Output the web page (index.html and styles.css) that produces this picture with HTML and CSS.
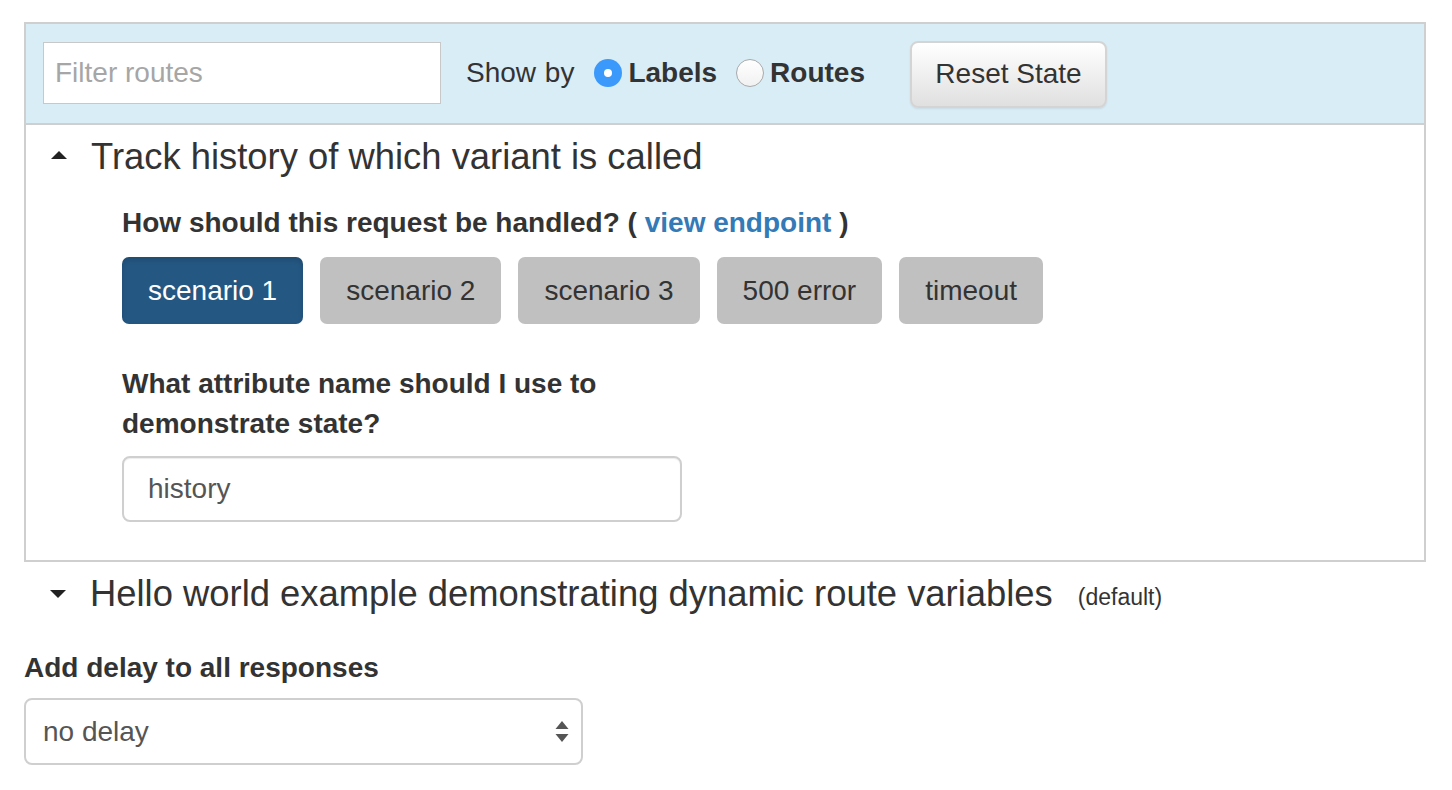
FILE: index.html
```html
<!DOCTYPE html>
<html>
<head>
<meta charset="utf-8">
<link rel="stylesheet" href="styles.css">
</head>
<body>
<div class="page">
  <div class="panel">
    <div class="toolbar">
      <input class="filter" type="text" placeholder="Filter routes">
      <span class="show-by">Show by</span>
      <label class="radio-opt"><span class="radio checked"></span><span class="radio-text">Labels</span></label>
      <label class="radio-opt"><span class="radio"></span><span class="radio-text">Routes</span></label>
      <button class="reset-btn">Reset State</button>
    </div>
    <div class="route-body">
      <div class="route-title">
        <span class="caret caret-up"></span>
        <span>Track history of which variant is called</span>
      </div>
      <div class="route-content">
        <div class="field-label">How should this request be handled? ( <a class="link" href="#">view endpoint</a> )</div>
        <div class="variants">
          <button class="variant active">scenario 1</button>
          <button class="variant">scenario 2</button>
          <button class="variant">scenario 3</button>
          <button class="variant">500 error</button>
          <button class="variant">timeout</button>
        </div>
        <div class="field-label attr-label">What attribute name should I use to demonstrate state?</div>
        <input class="text-input" type="text" value="history">
      </div>
    </div>
  </div>
  <div class="route-title collapsed">
    <span class="caret caret-down"></span>
    <span>Hello world example demonstrating dynamic route variables</span>
    <span class="default-tag">(default)</span>
  </div>
  <div class="field-label delay-label">Add delay to all responses</div>
  <div class="select-box">
    <span>no delay</span>
    <svg class="select-arrows" width="14" height="22" viewBox="0 0 14 22">
      <polygon points="7,0 13.5,8 0.5,8" fill="#555"/>
      <polygon points="0.5,13 13.5,13 7,21" fill="#555"/>
    </svg>
  </div>
</div>
</body>
</html>
```

FILE: styles.css
```css
html, body {
  margin: 0;
  padding: 0;
  background: #fff;
}
body {
  font-family: "Liberation Sans", Arial, Helvetica, sans-serif;
  font-size: 28px;
  line-height: 40px;
  color: #333;
}
.page {
  padding: 22px 26px 0 24px;
}
.panel {
  border: 2px solid #cfcfcf;
}
.toolbar {
  display: flex;
  align-items: center;
  height: 101px;
  padding-left: 17px;
  padding-bottom: 2px;
  box-sizing: border-box;
  background: #d9edf7;
  border-bottom: 2px solid #cfcfcf;
}
.filter {
  box-sizing: border-box;
  width: 398px;
  height: 62px;
  border: 1px solid #c8c8c8;
  border-radius: 0;
  padding: 0 11px;
  font-family: inherit;
  font-size: 28px;
  color: #555;
  background: #fff;
  outline: none;
}
.filter::placeholder {
  color: #a6a6a6;
}
.show-by {
  margin-left: 25px;
  margin-right: 20px;
  word-spacing: 1px;
}
.radio-opt {
  display: flex;
  align-items: center;
  font-weight: bold;
  margin-right: 19px;
}
.radio {
  box-sizing: border-box;
  width: 28px;
  height: 28px;
  border-radius: 50%;
  border: 1px solid #a9a9a9;
  background: linear-gradient(#fff, #f1f1f1);
  margin-right: 6px;
  position: relative;
}
.radio.checked {
  border: none;
  background: #3b99fc;
}
.radio.checked::after {
  content: "";
  position: absolute;
  left: 10px;
  top: 10px;
  width: 8px;
  height: 8px;
  border-radius: 50%;
  background: #fff;
}
.reset-btn {
  box-sizing: border-box;
  margin-left: 26px;
  margin-top: 3px;
  width: 197px;
  height: 67px;
  border: 2px solid #d4d4d4;
  border-radius: 8px;
  background: linear-gradient(#ffffff, #e0e0e0);
  box-shadow: 0 1px 2px rgba(0,0,0,0.08);
  font-family: inherit;
  font-size: 28px;
  color: #333;
  padding: 0;
}
.route-body {
  padding: 12px 0 38px 0;
}
.route-title {
  display: flex;
  align-items: center;
  font-size: 36.4px;
  line-height: 40px;
  height: 40px;
}
.caret {
  width: 0;
  height: 0;
  margin-left: 25px;
  margin-right: 24px;
  border-left: 8px solid transparent;
  border-right: 8px solid transparent;
}
.caret-up {
  border-bottom: 8px solid #222;
  margin-top: -4px;
}
.caret-down {
  border-top: 8px solid #222;
  margin-left: 26px;
}
.route-content {
  padding-left: 96px;
  padding-top: 26px;
}
.field-label {
  font-weight: bold;
}
.link {
  color: #337ab7;
  text-decoration: none;
}
.variants {
  display: flex;
  gap: 17px;
  margin-top: 14px;
}
.variant {
  height: 67px;
  padding: 0 26px;
  border: none;
  border-radius: 7px;
  background: #c0c0c0;
  font-family: inherit;
  font-size: 28px;
  color: #333;
}
.variant.active {
  background: #245782;
  color: #fff;
  box-shadow: inset 0 3px 5px rgba(0,0,0,0.125);
}
.attr-label {
  width: 560px;
  margin-top: 40px;
}
.text-input {
  display: block;
  box-sizing: border-box;
  width: 560px;
  height: 66px;
  margin-top: 12px;
  border: 2px solid #cfcfcf;
  border-radius: 8px;
  padding: 0 24px;
  font-family: inherit;
  font-size: 28px;
  color: #555;
  background: #fff;
  box-shadow: inset 0 1px 1px rgba(0,0,0,0.075);
  outline: none;
}
.collapsed {
  margin-top: 12px;
}
.default-tag {
  font-size: 23px;
  margin-left: 25px;
  margin-top: 6px;
}
.delay-label {
  margin-top: 34px;
}
.select-box {
  box-sizing: border-box;
  display: flex;
  align-items: center;
  justify-content: space-between;
  width: 559px;
  height: 67px;
  margin-top: 10px;
  padding: 0 12px 0 17px;
  border: 2px solid #cfcfcf;
  border-radius: 8px;
  color: #555;
}
.select-arrows {
  display: block;
}
```
